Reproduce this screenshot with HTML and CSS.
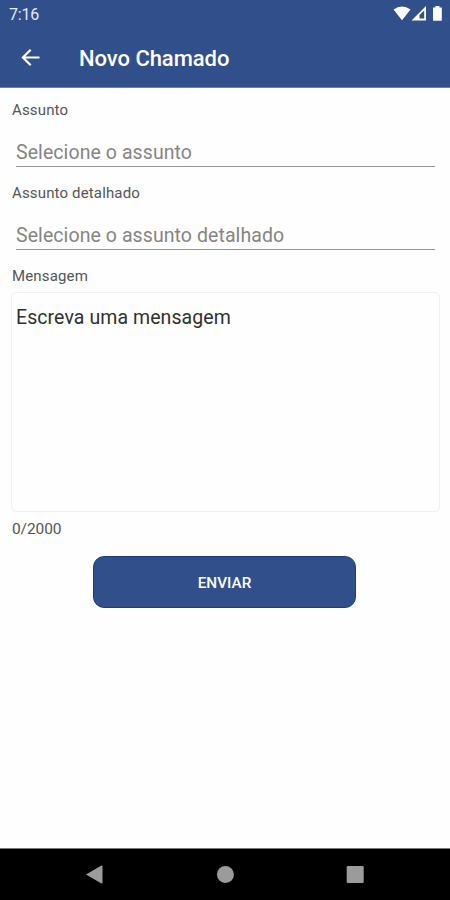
FILE: index.html
```html
<!DOCTYPE html>
<html lang="pt-BR">
<head>
<meta charset="utf-8">
<title>Novo Chamado</title>
<link rel="stylesheet" href="styles.css">
</head>
<body>
<header class="header">
  <div class="status">
    <span class="clock">7:16</span>
    <svg class="status-icons" width="50" height="18" viewBox="0 0 50 18">
      <path fill="#fff" d="M.5 4.500Q9 -1.500 17.500 4.500L9 15.300Z"/>
      <path fill="#fff" fill-rule="evenodd" d="M33 1V15.500H18.500ZM31.200 5.500L26.500 10V13.500H31.200Z"/>
      <path fill="#fff" d="M42.500 1h4v1.500h2.300V15.800h-8.800V2.500h2.500z"/>
    </svg>
  </div>
  <div class="toolbar">
    <svg class="back" width="20" height="20" viewBox="0 0 20 20"><path d="M18.500 9.500H2.500M9.700 1.700L1.900 9.500l7.800 7.800" fill="none" stroke="#fff" stroke-width="2.200"/></svg>
    <h1 class="title">Novo Chamado</h1>
  </div>
</header>
<main class="form">
  <div class="label">Assunto</div>
  <div class="field">Selecione o assunto</div>
  <div class="label">Assunto detalhado</div>
  <div class="field">Selecione o assunto detalhado</div>
  <div class="label">Mensagem</div>
  <div class="message">Escreva uma mensagem</div>
  <div class="counter">0/2000</div>
  <button class="send">ENVIAR</button>
</main>
<nav class="navbar">
  <svg width="18" height="20" viewBox="0 0 18 20"><path fill="#9b9b9b" d="M0 9.500L15 .7Q16.500 .1 16.500 1.500V17.500Q16.500 18.900 15 18.300Z"/></svg>
  <svg width="18" height="18" viewBox="0 0 18 18"><circle cx="9.400" cy="8.500" r="8.500" fill="#9b9b9b"/></svg>
  <svg width="18" height="18" viewBox="0 0 18 18"><rect x=".7" y="0" width="17" height="17" rx="1.200" fill="#9b9b9b"/></svg>
</nav>
</body>
</html>
```

FILE: styles.css
```css
* { box-sizing: border-box; }
body {
  margin: 0;
  width: 450px;
  height: 900px;
  display: flex;
  flex-direction: column;
  background: #fefefe;
  font-family: Roboto, "Liberation Sans", sans-serif;
  overflow: hidden;
}
.header { height: 88px; background: #314f8b; color: #fff; border-bottom: 1px solid #6b80ab; }
.status { height: 28px; display: flex; justify-content: space-between; padding: 5px 7px 0 9px; }
.clock { font-size: 16px; line-height: 19px; letter-spacing: -.2px; color: #e4eafa; }
.toolbar { height: 59px; display: flex; align-items: center; padding-left: 21px; }
.title { margin: 2px 0 0 38px; font-size: 22px; line-height: 28px; font-weight: 500; letter-spacing: -.05px; white-space: nowrap; }
.form { flex: 1; display: flex; flex-direction: column; padding: 12px 10px 0 11px; }
.label { height: 20px; line-height: 20px; font-size: 15px; color: #555; padding-left: 1px; letter-spacing: .15px; }
.field {
  height: 47px;
  margin: 0 5px 16px;
  padding: 18px 0 0;
  border-bottom: 1px solid #929292;
  font-size: 19.5px;
  letter-spacing: .08px;
  line-height: 30px;
  color: #858585;
}
.message {
  height: 220px;
  margin-top: 6px;
  padding: 10px 4px;
  border: 1px solid #efefef;
  border-radius: 5px;
  font-size: 19.5px;
  letter-spacing: .08px;
  line-height: 30px;
  color: #303030;
}
.counter { height: 20px; margin-top: 7px; padding-left: 1px; font-size: 15.5px; line-height: 20px; letter-spacing: -.1px; color: #555; }
.send {
  width: 263px;
  height: 52px;
  margin: 17px auto 0 82px;
  padding: 2px 0 0;
  border: 1px solid #1c3d7d;
  border-radius: 11px;
  background: #314f8b;
  color: #fff;
  font: 500 15.3px/20px Roboto, sans-serif;
}
.navbar {
  height: 52px;
  display: flex;
  justify-content: space-between;
  align-items: center;
  padding: 0 86px;
  background: #000;
  border-top: 1px solid #777;
}
```
